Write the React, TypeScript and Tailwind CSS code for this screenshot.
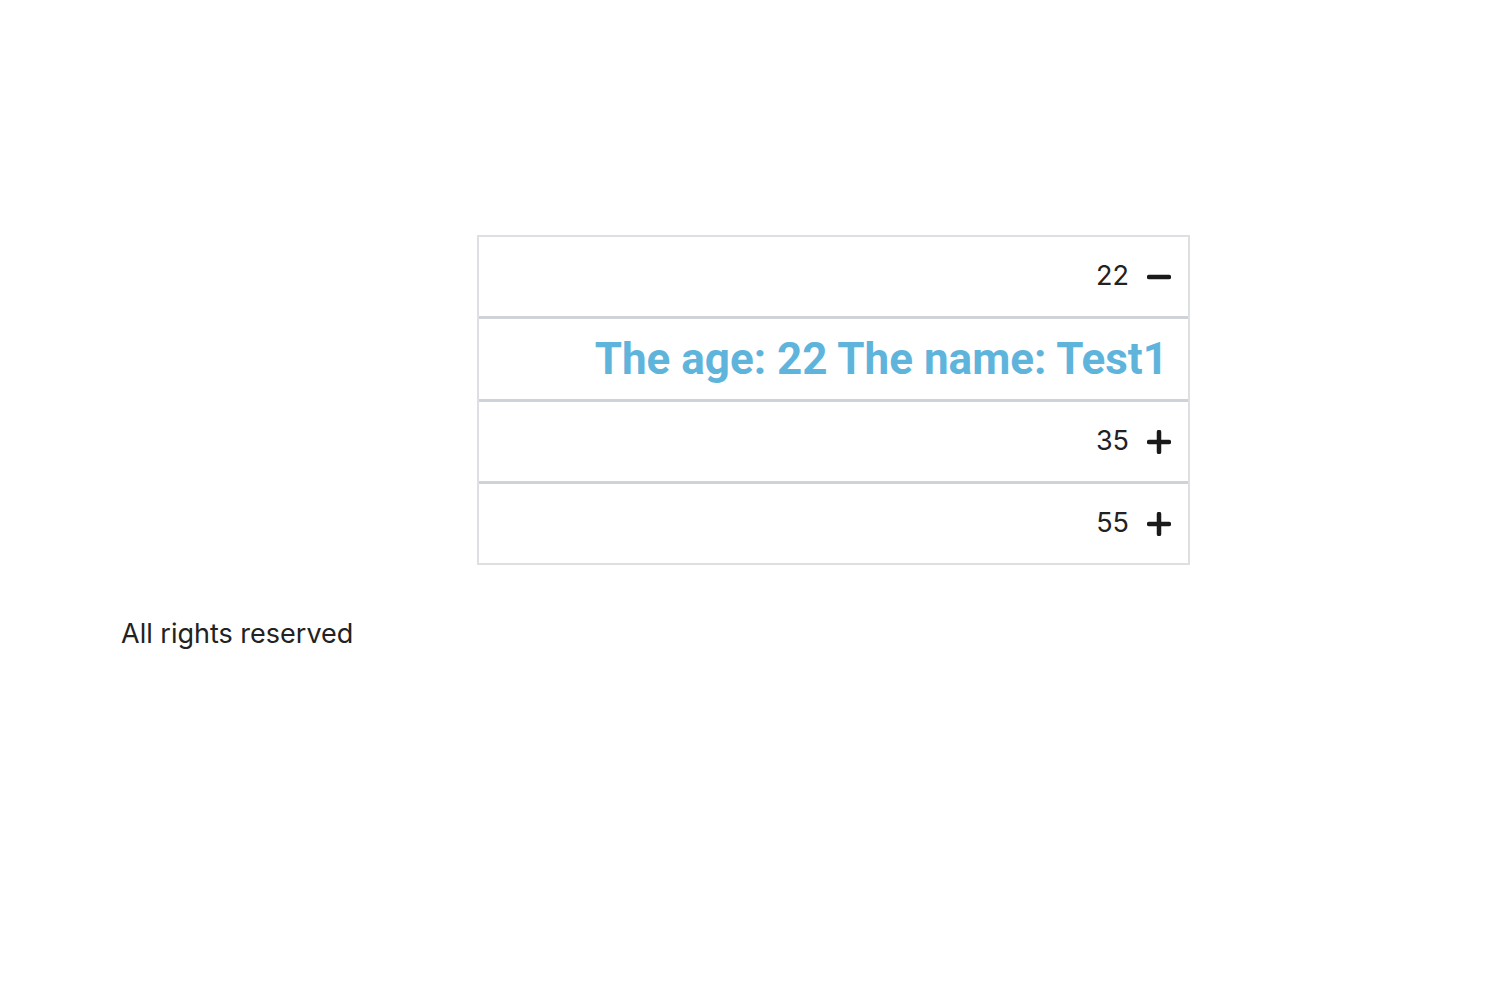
import { useState } from 'react';

type Person = { age: number; name: string };

const people: Person[] = [
  { age: 22, name: 'Test1' },
  { age: 35, name: 'Test2' },
  { age: 55, name: 'Test3' },
];

const Icon = ({ open }: { open: boolean }) => (
  <svg width="24" height="24" viewBox="0 0 24 24" className="text-[#1a1a1a]">
    <line x1="2" y1="12" x2="22" y2="12" stroke="currentColor" strokeWidth="4.5" strokeLinecap="round" />
    {!open && <line x1="12" y1="2" x2="12" y2="22" stroke="currentColor" strokeWidth="4.5" strokeLinecap="round" />}
  </svg>
);

export default function App() {
  const [openIndex, setOpenIndex] = useState<number | null>(0);

  return (
    <div className="min-h-screen bg-white font-['Inter','Liberation_Sans',sans-serif] text-[#222]">
      <div className="pt-[235px] pl-[477px]">
        <ul className="w-[713px] border-2 border-[#dedfe2]">
          {people.map((p, i) => (
            <li key={p.age} className={i > 0 ? 'border-t-[3px] border-[#cfd2d8]' : ''}>
              <button
                className="flex h-[79px] w-full items-center justify-end gap-[18px] pr-[17px] text-[27px]"
                onClick={() => setOpenIndex(openIndex === i ? null : i)}
              >
                <span>{p.age}</span>
                <Icon open={openIndex === i} />
              </button>
              {openIndex === i && (
                <div className="flex h-[83px] items-center justify-end border-t-[3px] border-[#cfd2d8] pr-[20px]">
                  <h2 className="font-['Roboto',sans-serif] text-[44px] font-bold text-[#5fb4dc]">
                    The age: {p.age} The name: {p.name}
                  </h2>
                </div>
              )}
            </li>
          ))}
        </ul>
      </div>
      <footer className="pl-[121px] pt-[49px] text-[27px]">All rights reserved</footer>
    </div>
  );
}
